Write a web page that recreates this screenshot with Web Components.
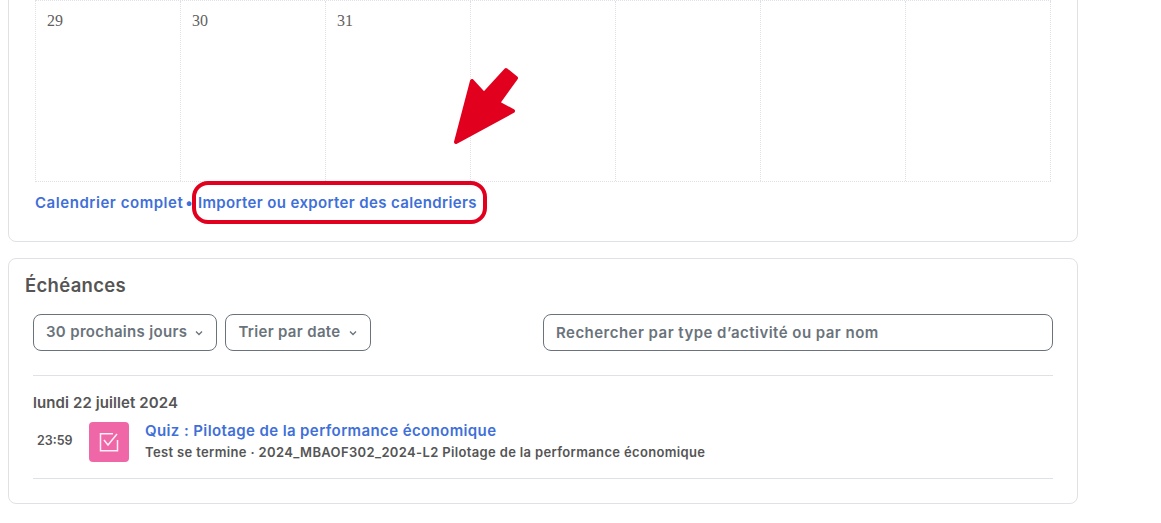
<!DOCTYPE html>
<html lang="fr">
<head>
<meta charset="utf-8">
<title>Échéances</title>
<style>
html, body { background: #fff; overflow: hidden; }
body { margin: -20px 8px 0; font-family: "Inter", "Liberation Sans", sans-serif; font-weight: 600; }
</style>
</head>
<body>

<calendar-card>
  <calendar-grid days="29,30,31,,,,"></calendar-grid>
</calendar-card>

<timeline-card>
  <timeline-event time="23:59" title="Quiz : Pilotage de la performance économique"
    meta="Test se termine · 2024_MBAOF302_2024-L2 Pilotage de la performance économique"></timeline-event>
</timeline-card>

<script>
class CalendarGrid extends HTMLElement {
  constructor() {
    super();
    this.attachShadow({ mode: 'open' });
  }
  connectedCallback() {
    const days = this.getAttribute('days').split(',');
    this.shadowRoot.innerHTML = `
<style>
:host { display: grid; grid-template-columns: repeat(7, 145px); width: 1016px; height: 182px; border-top: 1px dotted #dee2e6; border-bottom: 1px dotted #dee2e6; box-sizing: border-box; border-left: 1px dotted #dee2e6; }
div { border-right: 1px dotted #dee2e6; box-sizing: border-box; padding: 10px 11px; font: 400 16px/20px "Liberation Serif", serif; color: #5f5f5f; }
</style>
${days.map(d => `<div>${d}</div>`).join('')}`;
  }
}
customElements.define('calendar-grid', CalendarGrid);

class CalendarCard extends HTMLElement {
  constructor() {
    super();
    this.attachShadow({ mode: 'open' });
    this.shadowRoot.innerHTML = `
<style>
:host { display: block; position: relative; width: 1070px; height: 262px; box-sizing: border-box; padding: 19px 26px 0 26px; border: 1px solid #dee2e6; border-radius: 8px; }
.links { display: flex; align-items: center; height: 40px; font-size: 15px; color: #3f6fd8; white-space: nowrap; }
.full { letter-spacing: .55px; }
.export { letter-spacing: .36px; }
.dot { margin: 0 5px 0 2px; }
/* annotation drawn over the screenshot */
.ring { position: absolute; left: 183px; top: 200px; width: 295px; height: 43px; box-sizing: border-box; border: 4px solid #e2001f; border-radius: 16px; }
.arrow { position: absolute; left: 435px; top: 88px; overflow: visible; }
</style>
<slot></slot>
<div class="links"><span class="full">Calendrier complet</span><span class="dot">•</span><span class="export">Importer ou exporter des calendriers</span></div>
<div class="ring"></div>
<svg class="arrow" width="90" height="90" viewBox="0 0 90 90"><polygon points="12,73 28,12 40,25 62,1 72,9 54,34 69,42" fill="#e2001f" stroke="#e2001f" stroke-width="4" stroke-linejoin="round"/></svg>`;
  }
}
customElements.define('calendar-card', CalendarCard);

class FilterButton extends HTMLElement {
  constructor() {
    super();
    this.attachShadow({ mode: 'open' });
    this.shadowRoot.innerHTML = `
<style>
:host { display: inline-flex; align-items: center; height: 37px; box-sizing: border-box; padding: 0 13px 2px 12px; border: 1px solid #6a737b; border-radius: 8px; color: #6a737b; font-size: 15px; letter-spacing: .33px; white-space: nowrap; }
svg { margin: 2px 0 0 8px; }
</style>
<slot></slot>
<svg width="8" height="6" viewBox="0 0 8 6"><path d="M1 1.5 4 4.5 7 1.5" fill="none" stroke="#6a737b" stroke-width="1.3"/></svg>`;
  }
}
customElements.define('filter-button', FilterButton);

class SearchBox extends HTMLElement {
  constructor() {
    super();
    this.attachShadow({ mode: 'open' });
    this.shadowRoot.innerHTML = `
<style>
:host { display: flex; align-items: center; width: 510px; height: 37px; box-sizing: border-box; padding: 0 12px; border: 1px solid #6a737b; border-radius: 8px; color: #6a737b; font-size: 15px; letter-spacing: .47px; white-space: nowrap; }
</style>
<slot></slot>`;
  }
}
customElements.define('search-box', SearchBox);

class TimelineCard extends HTMLElement {
  constructor() {
    super();
    this.attachShadow({ mode: 'open' });
    this.shadowRoot.innerHTML = `
<style>
:host { display: block; width: 1070px; height: 246px; margin-top: 16px; box-sizing: border-box; padding: 14px 24px 0 16px; border: 1px solid #dee2e6; border-radius: 8px; color: #555; }
h3 { margin: 0; font-size: 18.5px; line-height: 24px; font-weight: 600; letter-spacing: .3px; }
.filters { display: flex; align-items: center; gap: 8px; margin: 17px 0 0 8px; }
search-box { margin-left: auto; }
.list { margin: 24px 0 0 8px; border-top: 1px solid #dee2e6; padding-top: 17px; }
.date { font-size: 15px; line-height: 20px; letter-spacing: .1px; }
</style>
<h3>Échéances</h3>
<div class="filters">
  <filter-button>30 prochains jours</filter-button>
  <filter-button>Trier par date</filter-button>
  <search-box>Rechercher par type d’activité ou par nom</search-box>
</div>
<div class="list">
  <div class="date">lundi 22 juillet 2024</div>
  <slot></slot>
</div>`;
  }
}
customElements.define('timeline-card', TimelineCard);

class TimelineEvent extends HTMLElement {
  constructor() {
    super();
    this.attachShadow({ mode: 'open' });
  }
  connectedCallback() {
    this.shadowRoot.innerHTML = `
<style>
:host { display: flex; align-items: flex-start; height: 66px; border-bottom: 1px solid #dee2e6; padding: 9px 0 16px; box-sizing: border-box; }
.time { width: 56px; padding-left: 4px; box-sizing: border-box; font-size: 12.5px; line-height: 38px; color: #555; }
.tile { flex: none; display: flex; align-items: center; justify-content: center; width: 40px; height: 40px; border-radius: 4px; background: #ef67a6; }
.text { margin: -2px 0 0 16px; white-space: nowrap; }
.title { font-size: 15px; line-height: 22px; color: #3f6fd8; letter-spacing: .39px; }
.meta { font-size: 13px; line-height: 20px; color: #555; letter-spacing: .35px; }
</style>
<div class="time">${this.getAttribute('time')}</div>
<div class="tile"><svg width="20" height="20" viewBox="0 0 20 20"><path d="M14 1.7H1.5V18.7H18.5V8" fill="none" stroke="#fff" stroke-opacity=".9" stroke-width="1.5"/><path d="M5 8 9 13 18 2" fill="none" stroke="#fff" stroke-opacity=".9" stroke-width="1.5"/></svg></div>
<div class="text">
  <div class="title">${this.getAttribute('title')}</div>
  <div class="meta">${this.getAttribute('meta')}</div>
</div>`;
  }
}
customElements.define('timeline-event', TimelineEvent);
</script>
</body>
</html>
